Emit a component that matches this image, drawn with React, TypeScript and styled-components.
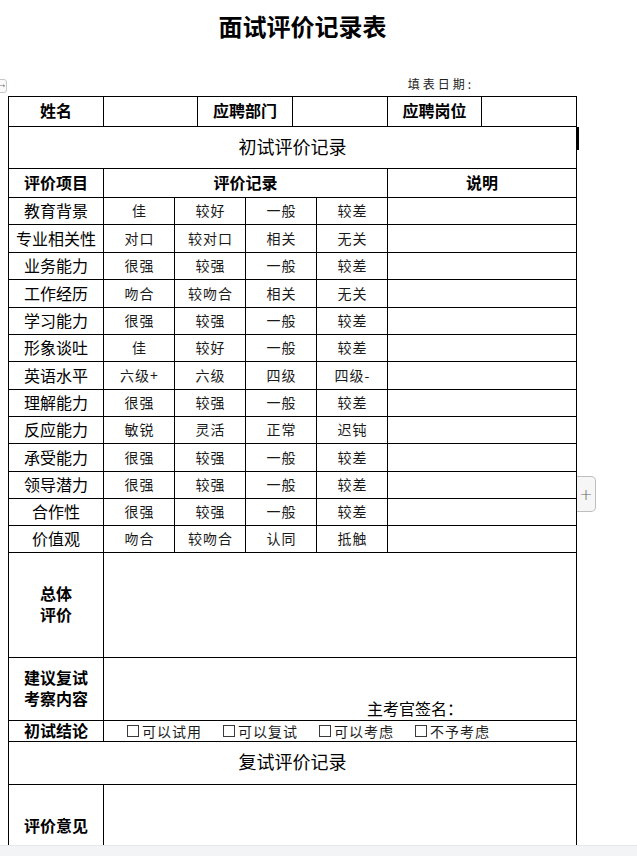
import React from "react";
import styled, { createGlobalStyle } from "styled-components";

const GlobalStyle = createGlobalStyle`
  html, body {
    margin: 0;
    padding: 0;
    overflow: hidden;
    background: #ffffff;
    font-family: "Noto Sans CJK SC", "Noto Sans", sans-serif;
    color: #000;
  }
  * { box-sizing: border-box; }
`;

const Page = styled.div`
  position: relative;
  width: 637px;
  height: 856px;
  overflow: hidden;
`;

const Title = styled.h1`
  margin: 0;
  padding: 14px 32px 0 0;
  font-size: 24px;
  line-height: 24px;
  font-weight: 700;
  text-align: center;
  letter-spacing: 0;
`;

const DateLine = styled.div`
  margin: 40px 0 0 8px;
  width: 569px;
  height: 12px;
  display: flex;
  justify-content: flex-end;
  padding-right: 103px;
  font-size: 12px;
  line-height: 12px;
  letter-spacing: 3px;
  color: #222;
`;

const SideTab = styled.div`
  position: absolute;
  left: -10px;
  top: 79px;
  width: 17px;
  height: 14px;
  border: 1px solid #c8c8c8;
  border-radius: 3px;
  background: #fafafa;
  display: flex;
  align-items: center;
  justify-content: flex-end;
  padding-right: 1px;
  font-family: "DejaVu Sans", sans-serif;
  font-size: 7px;
  line-height: 8px;
  color: #777;
`;

const Sheet = styled.div`
  position: relative;
  margin: 6px 0 0 8px;
  width: 569px;
  border-left: 1px solid #000;
  border-top: 1px solid #000;
`;

const Row = styled.div<{ $cols: string; $h: number }>`
  display: grid;
  grid-template-columns: ${(p) => p.$cols};
  grid-template-rows: minmax(0, 1fr);
  height: ${(p) => p.$h}px;
`;

type Kind = "label" | "item" | "value" | "section" | "plain";

const Cell = styled.div<{ $kind?: Kind }>`
  min-height: 0;
  border-right: 1px solid #000;
  border-bottom: 1px solid #000;
  display: flex;
  align-items: center;
  justify-content: center;
  text-align: center;
  white-space: pre-line;
  font-size: ${(p) =>
    p.$kind === "value" ? "14px" : p.$kind === "section" ? "18px" : "16px"};
  font-weight: ${(p) => (p.$kind === "label" ? 700 : 400)};
  line-height: ${(p) => (p.$kind === "label" ? "21px" : "18px")};
  letter-spacing: ${(p) => (p.$kind === "value" ? "1px" : "0")};
  padding-left: ${(p) => (p.$kind === "value" ? "1px" : "0")};
  padding-bottom: ${(p) => (p.$kind === "section" ? "4px" : "2px")};
  color: ${(p) => (p.$kind === "value" ? "#1a1a1a" : "#000")};
`;

const SignCell = styled(Cell)`
  align-items: flex-end;
  justify-content: flex-start;
  padding: 0 0 3px 263px;
  font-size: 16px;
  line-height: 18px;
`;

const ChoiceCell = styled(Cell)`
  justify-content: flex-start;
  padding-left: 23px;
  padding-bottom: 0;
  gap: 21px;
`;

const Choice = styled.span`
  display: inline-flex;
  align-items: center;
  gap: 3px;
  font-size: 14px;
  line-height: 14px;
  letter-spacing: 1px;
  color: #1a1a1a;
`;

const Box = styled.span`
  display: inline-block;
  width: 12px;
  height: 12px;
  border: 1px solid #3a3a3a;
  background: #fff;
`;

const CursorMark = styled.div`
  position: absolute;
  left: 568px;
  top: 30px;
  width: 2px;
  height: 23px;
  background: #000;
`;

const AddTab = styled.div`
  position: absolute;
  left: 577px;
  top: 476px;
  width: 19px;
  height: 36px;
  border: 1px solid #bdbdbd;
  border-left: none;
  border-radius: 0 5px 5px 0;
  background: #f6f6f6;
  display: flex;
  align-items: center;
  justify-content: center;
  font-family: "DejaVu Sans", sans-serif;
  font-size: 16px;
  font-weight: 300;
  color: #666;
`;

const BottomBar = styled.div`
  position: fixed;
  left: 0;
  right: 0;
  bottom: 0;
  height: 11px;
  background: #f3f4f6;
  border-top: 1px solid #e6e7ea;
`;

const MAIN = "95px 71px 71px 71px 71px 189px";
const HEAD = "95px 94px 95px 95px 94px 95px";
const WIDE = "95px 473px";

const rows: string[][] = [
  ["教育背景", "佳", "较好", "一般", "较差"],
  ["专业相关性", "对口", "较对口", "相关", "无关"],
  ["业务能力", "很强", "较强", "一般", "较差"],
  ["工作经历", "吻合", "较吻合", "相关", "无关"],
  ["学习能力", "很强", "较强", "一般", "较差"],
  ["形象谈吐", "佳", "较好", "一般", "较差"],
  ["英语水平", "六级+", "六级", "四级", "四级-"],
  ["理解能力", "很强", "较强", "一般", "较差"],
  ["反应能力", "敏锐", "灵活", "正常", "迟钝"],
  ["承受能力", "很强", "较强", "一般", "较差"],
  ["领导潜力", "很强", "较强", "一般", "较差"],
  ["合作性", "很强", "较强", "一般", "较差"],
  ["价值观", "吻合", "较吻合", "认同", "抵触"],
];

const heights = [27, 28, 27, 28, 27, 27, 28, 27, 27, 28, 27, 27, 27];

const choices = ["可以试用", "可以复试", "可以考虑", "不予考虑"];

export default function App() {
  return (
    <Page>
      <GlobalStyle />
      <Title>面试评价记录表</Title>
      <SideTab>→</SideTab>
      <DateLine>填表日期:</DateLine>
      <Sheet>
        <Row $cols={HEAD} $h={30}>
          <Cell $kind="label">姓名</Cell>
          <Cell />
          <Cell $kind="label">应聘部门</Cell>
          <Cell />
          <Cell $kind="label">应聘岗位</Cell>
          <Cell />
        </Row>
        <Row $cols="1fr" $h={42}>
          <Cell $kind="section">初试评价记录</Cell>
        </Row>
        <Row $cols="95px 284px 189px" $h={29}>
          <Cell $kind="label">评价项目</Cell>
          <Cell $kind="label">评价记录</Cell>
          <Cell $kind="label">说明</Cell>
        </Row>
        {rows.map((r, i) => (
          <Row key={r[0]} $cols={MAIN} $h={heights[i]}>
            <Cell $kind="item">{r[0]}</Cell>
            {r.slice(1).map((v, j) => (
              <Cell key={j} $kind="value">
                {v}
              </Cell>
            ))}
            <Cell />
          </Row>
        ))}
        <Row $cols={WIDE} $h={105}>
          <Cell $kind="label">{"总体\n评价"}</Cell>
          <Cell />
        </Row>
        <Row $cols={WIDE} $h={63}>
          <Cell $kind="label">{"建议复试\n考察内容"}</Cell>
          <SignCell>主考官签名：</SignCell>
        </Row>
        <Row $cols={WIDE} $h={21}>
          <Cell $kind="label">初试结论</Cell>
          <ChoiceCell>
            {choices.map((c) => (
              <Choice key={c}>
                <Box />
                {c}
              </Choice>
            ))}
          </ChoiceCell>
        </Row>
        <Row $cols="1fr" $h={43}>
          <Cell $kind="section">复试评价记录</Cell>
        </Row>
        <Row $cols={WIDE} $h={84}>
          <Cell $kind="label">评价意见</Cell>
          <Cell />
        </Row>
        <CursorMark />
      </Sheet>
      <AddTab>+</AddTab>
      <BottomBar />
    </Page>
  );
}
